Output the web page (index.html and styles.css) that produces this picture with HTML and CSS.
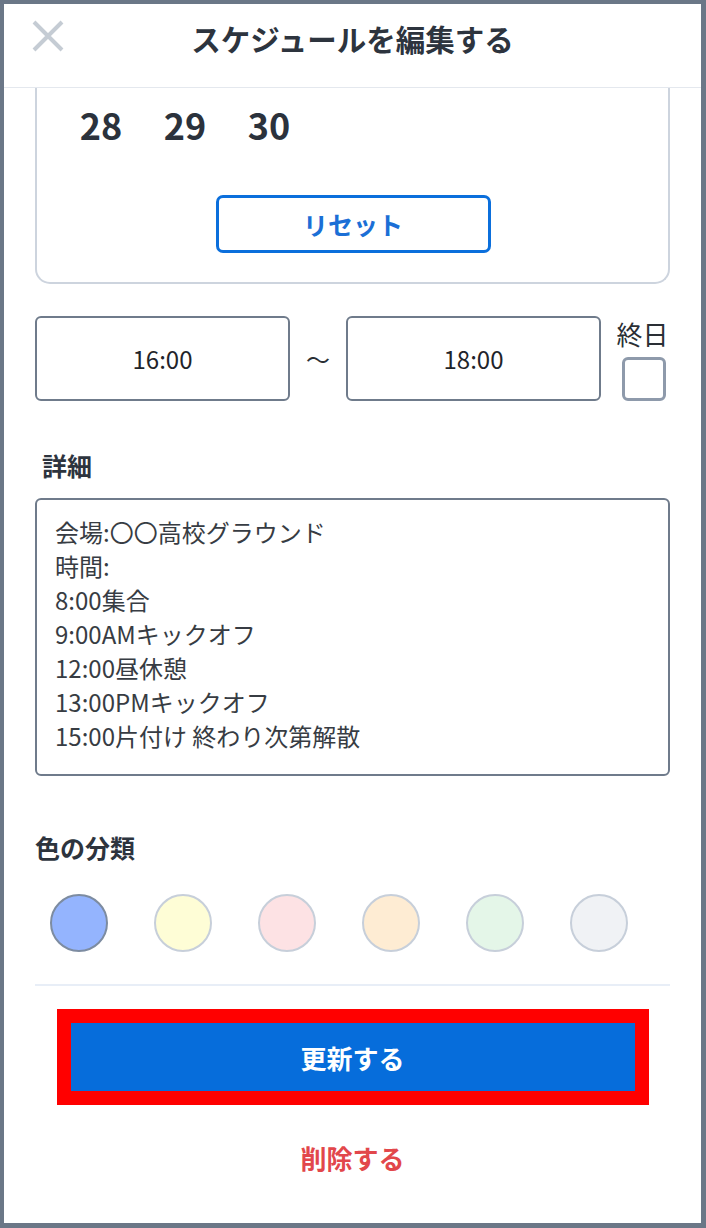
FILE: index.html
```html
<!DOCTYPE html>
<html lang="ja">
<head>
<meta charset="utf-8">
<title>スケジュールを編集する</title>
<link rel="stylesheet" href="styles.css">
</head>
<body>
<div class="frame">
  <header class="header">
    <button class="close" aria-label="閉じる">
      <svg width="32" height="32" viewBox="0 0 32 32"><path d="M2 2 L30 30 M30 2 L2 30" stroke="#c5ccd4" stroke-width="4" fill="none"/></svg>
    </button>
    <h1 class="title">スケジュールを編集する</h1>
    <span></span>
  </header>
  <main class="content">
    <section class="calendar">
      <div class="days">
        <span class="day">28</span>
        <span class="day">29</span>
        <span class="day">30</span>
      </div>
      <div class="reset-wrap"><button class="reset">リセット</button></div>
    </section>

    <div class="time-row">
      <div class="time-box">16:00</div>
      <div class="tilde">〜</div>
      <div class="time-box">18:00</div>
      <div class="allday">
        <span class="allday-label">終日</span>
        <span class="checkbox"></span>
      </div>
    </div>

    <h2 class="label label-detail">詳細</h2>
    <div class="detail">会場:〇〇高校グラウンド
時間:
8:00集合
9:00AMキックオフ
12:00昼休憩
13:00PMキックオフ
15:00片付け 終わり次第解散</div>

    <h2 class="label label-color">色の分類</h2>
    <div class="swatches">
      <span class="swatch swatch-blue selected"></span>
      <span class="swatch swatch-yellow"></span>
      <span class="swatch swatch-pink"></span>
      <span class="swatch swatch-orange"></span>
      <span class="swatch swatch-green"></span>
      <span class="swatch swatch-gray"></span>
    </div>

    <hr class="divider">

    <button class="update">更新する</button>
    <button class="delete">削除する</button>
  </main>
</div>
</body>
</html>
```
FILE: styles.css
```css
* { box-sizing: border-box; }
html, body { margin: 0; padding: 0; background: #ffffff; }
body {
  font-family: "Noto Sans CJK JP", "Noto Sans", sans-serif;
  color: #2f3640;
}
.frame {
  width: 706px;
  height: 1228px;
  border-style: solid;
  border-color: #6b7787;
  border-width: 4px 5px 5px 4px;
  background: #fff;
  overflow: hidden;
}
.header {
  height: 84px;
  border-bottom: 1px solid #e4e8ee;
  display: grid;
  grid-template-columns: 1fr auto 1fr;
  align-items: start;
  padding: 16px 28px 0;
}
.close {
  border: 0;
  background: none;
  padding: 0;
  width: 32px;
  height: 32px;
  justify-self: start;
}
.close svg { display: block; }
.title {
  margin: 0;
  font-size: 29.5px;
  line-height: 34px;
  font-weight: 700;
  color: #2d343e;
  padding-top: 1px;
}
.content {
  padding: 0 31px;
}
.calendar {
  border: 2px solid #cdd4de;
  border-top: none;
  border-radius: 0 0 15px 15px;
  padding: 12px 22px 29px;
}
.days {
  display: grid;
  grid-template-columns: repeat(7, 84px);
}
.day {
  text-align: center;
  font-size: 36px;
  line-height: 48px;
  font-weight: 700;
  color: #2b323c;
}
.reset-wrap {
  display: flex;
  justify-content: center;
  margin-top: 47px;
}
.reset {
  width: 275px;
  height: 58px;
  border: 3px solid #0b6fdc;
  border-radius: 7px;
  background: #fff;
  font-family: inherit;
  font-size: 25px;
  font-weight: 700;
  color: #1b6fd6;
  padding: 0;
  margin-left: 1px;
}
.time-row {
  display: flex;
  align-items: flex-start;
  margin-top: 32px;
}
.time-box {
  width: 255px;
  height: 85px;
  border: 2px solid #6f7b8b;
  border-radius: 6px;
  display: flex;
  align-items: center;
  justify-content: center;
  font-size: 24px;
  color: #1f242a;
}
.tilde {
  width: 56px;
  height: 85px;
  display: flex;
  align-items: center;
  justify-content: center;
  font-size: 24px;
  color: #2a2f35;
}
.allday {
  flex: 1;
  display: flex;
  flex-direction: column;
  align-items: center;
  margin-left: 14px;
}
.allday-label {
  font-size: 26px;
  line-height: 36px;
  color: #2a2f35;
}
.checkbox {
  width: 44px;
  height: 44px;
  border: 3px solid #8e9aab;
  border-radius: 6px;
  margin-top: 5px;
  margin-left: 2px;
}
.label {
  margin: 0;
  font-size: 25px;
  line-height: 36px;
  font-weight: 700;
  color: #2d343e;
}
.label-detail {
  margin-top: 46px;
  padding-left: 7px;
}
.detail {
  margin-top: 15px;
  height: 278px;
  border: 2px solid #6f7b8b;
  border-radius: 6px;
  padding: 15px 18px;
  font-size: 24px;
  line-height: 34px;
  white-space: pre-line;
  color: #373c43;
}
.label-color {
  margin-top: 53px;
}
.swatches {
  display: flex;
  gap: 46px;
  padding-left: 15px;
  margin-top: 29px;
}
.swatch {
  width: 58px;
  height: 58px;
  border-radius: 50%;
  border: 2px solid #c7cfda;
}
.swatch.selected { border-color: #7d8ca1; }
.swatch-blue { background: #94b4fe; }
.swatch-yellow { background: #fefdd6; }
.swatch-pink { background: #fde2e4; }
.swatch-orange { background: #feecd3; }
.swatch-green { background: #e4f6e8; }
.swatch-gray { background: #f0f2f5; }
.divider {
  border: 0;
  border-top: 2px solid #e8eef7;
  margin: 32px 0 0;
}
.update {
  display: block;
  width: 564px;
  height: 68px;
  margin: 37px auto 0;
  background: #066ddb;
  border: 0;
  outline: 14px solid #ff0000;
  color: #fff;
  font-family: inherit;
  font-size: 26px;
  font-weight: 700;
  padding: 0;
}
.delete {
  display: block;
  margin: 47px auto 0;
  border: 0;
  background: none;
  color: #e2474b;
  font-family: inherit;
  font-size: 26px;
  line-height: 40px;
  font-weight: 700;
  padding: 0;
}
```
